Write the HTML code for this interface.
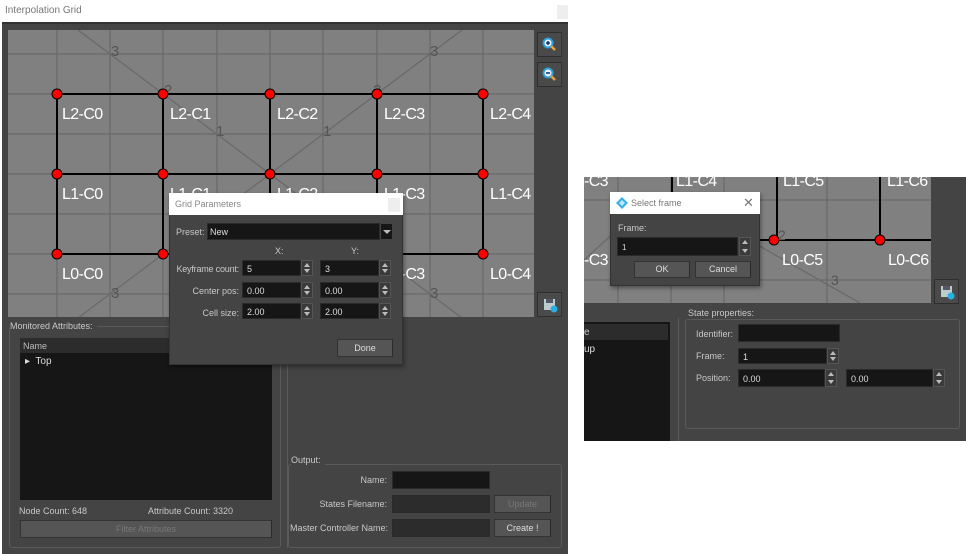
<!DOCTYPE html>
<html><head><meta charset="utf-8"><style>
*{box-sizing:border-box;margin:0;padding:0}
body{width:966px;height:554px;background:#fff;position:relative;overflow:hidden;font-family:"Liberation Sans",sans-serif;font-size:9px;color:#c8c8c8}
.a{position:absolute}
.f{position:absolute;background:#161616;border:1px solid #2a2a2a}
.sp{position:absolute;width:12px;background:#3a3a3a;border:1px solid #555}
.sp:before{content:"";position:absolute;left:2px;top:2px;border:3px solid transparent;border-bottom:4px solid #bbb;border-top:0}
.sp:after{content:"";position:absolute;left:2px;bottom:2px;border:3px solid transparent;border-top:4px solid #bbb;border-bottom:0}
.btn{position:absolute;background:#555;border:1px solid #333;border-right-color:#2a2a2a;color:#ddd;text-align:center;font-size:9px}
.grp{position:absolute;border:1px solid #5a5a5a;border-radius:3px}
.lbl{position:absolute;font-size:9px;color:#c8c8c8;white-space:nowrap}
.r{position:absolute;font-size:9px;color:#c8c8c8;white-space:nowrap;text-align:right}
.tb{position:absolute;background:#4a4a4a;border:1px solid #2e2e2e;border-right-color:#333;width:25px;height:25px}
</style></head><body>
<div class="a" style="left:5px;top:5px;font-size:10px;color:#777">Interpolation Grid</div>
<div class="a" style="left:557px;top:5px;width:11px;height:14px;background:#eee"></div>
<div class="a" style="left:2px;top:22px;width:566px;height:532px;background:#444;border-top:2px solid #333"></div>
<svg class="a" style="left:8px;top:30px" width="526" height="287" viewBox="8 30 526 287">
<rect x="8" y="30" width="526" height="287" fill="#808080"/>
<g stroke="#6a6a6a" stroke-width="1.3">
<line x1="57" y1="30" x2="57" y2="317"/><line x1="110" y1="30" x2="110" y2="317"/><line x1="163" y1="30" x2="163" y2="317"/><line x1="217" y1="30" x2="217" y2="317"/><line x1="270" y1="30" x2="270" y2="317"/><line x1="323" y1="30" x2="323" y2="317"/><line x1="377" y1="30" x2="377" y2="317"/><line x1="430" y1="30" x2="430" y2="317"/><line x1="483" y1="30" x2="483" y2="317"/>
<line x1="8" y1="54" x2="534" y2="54"/><line x1="8" y1="94" x2="534" y2="94"/><line x1="8" y1="134" x2="534" y2="134"/><line x1="8" y1="174" x2="534" y2="174"/><line x1="8" y1="214" x2="534" y2="214"/><line x1="8" y1="254" x2="534" y2="254"/><line x1="8" y1="294" x2="534" y2="294"/>
<line x1="78" y1="30" x2="462" y2="318"/><line x1="462" y1="30" x2="78" y2="318"/>
</g>
<g fill="#555" font-family="Liberation Sans" font-size="15"><text x="111" y="56">3</text><text x="430" y="56">3</text><text x="111" y="298">3</text><text x="430" y="298">3</text><text x="164" y="95">2</text><text x="373" y="95">2</text><text x="216" y="136">1</text><text x="323" y="136">1</text></g>
<g stroke="#000" stroke-width="2" fill="none"><rect x="57" y="94" width="426" height="160"/><line x1="57" y1="174" x2="483" y2="174"/><line x1="163" y1="94" x2="163" y2="254"/><line x1="270" y1="94" x2="270" y2="254"/><line x1="377" y1="94" x2="377" y2="254"/></g>
<g fill="#f00" stroke="#000" stroke-width="1">
<circle cx="57" cy="94" r="5"/><circle cx="163" cy="94" r="5"/><circle cx="270" cy="94" r="5"/><circle cx="377" cy="94" r="5"/><circle cx="483" cy="94" r="5"/>
<circle cx="57" cy="174" r="5"/><circle cx="163" cy="174" r="5"/><circle cx="270" cy="174" r="5"/><circle cx="377" cy="174" r="5"/><circle cx="483" cy="174" r="5"/>
<circle cx="57" cy="254" r="5"/><circle cx="163" cy="254" r="5"/><circle cx="270" cy="254" r="5"/><circle cx="377" cy="254" r="5"/><circle cx="483" cy="254" r="5"/></g>
<g fill="#fff" font-family="Liberation Sans" font-size="16" letter-spacing="-0.6">
<text x="62" y="119">L2-C0</text><text x="170" y="119">L2-C1</text><text x="277" y="119">L2-C2</text><text x="384" y="119">L2-C3</text><text x="490" y="119">L2-C4</text>
<text x="62" y="199">L1-C0</text><text x="170" y="199">L1-C1</text><text x="277" y="199">L1-C2</text><text x="384" y="199">L1-C3</text><text x="490" y="199">L1-C4</text>
<text x="62" y="279">L0-C0</text><text x="384" y="279">L0-C3</text><text x="490" y="279">L0-C4</text></g>
</svg>
<div class="tb" style="left:537px;top:32px"><svg width="23" height="23"><circle cx="10" cy="10" r="4.5" fill="#eef" stroke="#29a0d8" stroke-width="2"/><line x1="8" y1="10" x2="12" y2="10" stroke="#036" stroke-width="1.5"/><line x1="10" y1="8" x2="10" y2="12" stroke="#036" stroke-width="1.5"/><line x1="13" y1="13" x2="17" y2="17" stroke="#e8a040" stroke-width="2.5"/></svg></div>
<div class="tb" style="left:537px;top:62px"><svg width="23" height="23"><circle cx="10" cy="10" r="4.5" fill="#eef" stroke="#29a0d8" stroke-width="2"/><line x1="8" y1="10" x2="12" y2="10" stroke="#036" stroke-width="1.5"/><line x1="13" y1="13" x2="17" y2="17" stroke="#e8a040" stroke-width="2.5"/></svg></div>
<div class="tb" style="left:537px;top:292px"><svg width="23" height="23"><rect x="6" y="6" width="11" height="11" fill="#bcc"/><rect x="8" y="6" width="7" height="4" fill="#556"/><circle cx="16" cy="16" r="3.5" fill="#2ab0e0"/></svg></div>
<div class="grp" style="left:9px;top:326px;width:272px;height:222px"></div>
<div class="lbl" style="left:10px;top:321px;background:#444;padding-right:4px">Monitored Attributes:</div>
<div class="a" style="left:20px;top:338px;width:252px;height:162px;background:#161616"></div>
<div class="a" style="left:20px;top:338px;width:252px;height:15px;background:#2c2c2c;padding:3px 3px;color:#bbb">Name</div>
<div class="lbl" style="left:25px;top:356px;font-size:10px;color:#ddd">▸&nbsp; Top</div>
<div class="lbl" style="left:19px;top:506px">Node Count: 648</div>
<div class="lbl" style="left:148px;top:506px">Attribute Count: 3320</div>
<div class="btn" style="left:20px;top:520px;width:252px;height:18px;line-height:16px;color:#777">Filter Attributes</div>
<div class="a" style="left:287px;top:340px;width:1px;height:208px;background:#5a5a5a"></div>
<div class="grp" style="left:288px;top:464px;width:274px;height:84px"></div>
<div class="lbl" style="left:291px;top:455px;background:#444;padding-right:4px">Output:</div>
<div class="r" style="left:290px;width:97px;top:475px">Name:</div>
<div class="r" style="left:290px;width:97px;top:499px">States Filename:</div>
<div class="r" style="left:290px;width:97px;top:523px">Master Controller Name:</div>
<div class="f" style="left:392px;top:471px;width:98px;height:18px"></div>
<div class="f" style="left:392px;top:495px;width:98px;height:18px;background:#2c2c2c"></div>
<div class="f" style="left:392px;top:519px;width:98px;height:18px;background:#2c2c2c"></div>
<div class="btn" style="left:494px;top:495px;width:57px;height:18px;line-height:16px;color:#777">Update</div>
<div class="btn" style="left:494px;top:519px;width:57px;height:18px;line-height:16px">Create !</div>
<div class="a" style="left:169px;top:193px;width:234px;height:172px;background:#444;border:1px solid #333;box-shadow:1px 2px 4px rgba(0,0,0,.4)"></div>
<div class="a" style="left:169px;top:193px;width:234px;height:22px;background:#fff"></div>
<div class="lbl" style="left:175px;top:199px;color:#888">Grid Parameters</div>
<div class="a" style="left:388px;top:198px;width:12px;height:14px;background:#eee"></div>
<div class="lbl" style="left:176px;top:227px">Preset:</div>
<div class="f" style="left:207px;top:223px;width:173px;height:17px;padding:3px 2px;color:#ddd">New</div>
<div class="a" style="left:380px;top:223px;width:13px;height:17px;background:#161616;border:1px solid #444"><div style="margin:6px 2px;border:4px solid transparent;border-top:4px solid #bbb;border-bottom:0"></div></div>
<div class="lbl" style="left:275px;top:246px">X:</div><div class="lbl" style="left:351px;top:246px">Y:</div>
<div class="r" style="left:170px;width:69px;top:264px;letter-spacing:-0.2px">Keyframe count:</div>
<div class="r" style="left:170px;width:69px;top:286px">Center pos:</div>
<div class="r" style="left:170px;width:69px;top:308px">Cell size:</div>
<div class="f" style="left:242px;top:260px;width:59px;height:16px;padding:3px 4px;color:#ddd">5</div><div class="sp" style="left:301px;top:260px;height:16px"></div>
<div class="f" style="left:320px;top:260px;width:59px;height:16px;padding:3px 4px;color:#ddd">3</div><div class="sp" style="left:379px;top:260px;height:16px"></div>
<div class="f" style="left:242px;top:282px;width:59px;height:16px;padding:3px 4px;color:#ddd">0.00</div><div class="sp" style="left:301px;top:282px;height:16px"></div>
<div class="f" style="left:320px;top:282px;width:59px;height:16px;padding:3px 4px;color:#ddd">0.00</div><div class="sp" style="left:379px;top:282px;height:16px"></div>
<div class="f" style="left:242px;top:303px;width:59px;height:16px;padding:3px 4px;color:#ddd">2.00</div><div class="sp" style="left:301px;top:303px;height:16px"></div>
<div class="f" style="left:320px;top:303px;width:59px;height:16px;padding:3px 4px;color:#ddd">2.00</div><div class="sp" style="left:379px;top:303px;height:16px"></div>
<div class="btn" style="left:337px;top:339px;width:56px;height:18px;line-height:16px">Done</div>
<div class="a" style="left:584px;top:177px;width:382px;height:264px;background:#444"></div>
<svg class="a" style="left:584px;top:177px" width="347" height="126" viewBox="584 177 347 126">
<rect x="584" y="177" width="347" height="126" fill="#808080"/>
<g stroke="#6a6a6a" stroke-width="1.3"><line x1="618" y1="177" x2="618" y2="303"/><line x1="671" y1="177" x2="671" y2="303"/><line x1="724" y1="177" x2="724" y2="303"/><line x1="827" y1="177" x2="827" y2="303"/><line x1="584" y1="200" x2="931" y2="200"/><line x1="584" y1="280" x2="931" y2="280"/><line x1="740" y1="235" x2="860" y2="303"/><line x1="584" y1="260" x2="650" y2="200"/></g>
<g stroke="#000" stroke-width="2"><line x1="672" y1="177" x2="672" y2="192"/><line x1="777" y1="177" x2="777" y2="240"/><line x1="880" y1="177" x2="880" y2="240"/><line x1="760" y1="240" x2="931" y2="240"/></g>
<g fill="#f00" stroke="#000"><circle cx="774" cy="240" r="5"/><circle cx="880" cy="240" r="5"/></g>
<g fill="#fff" font-family="Liberation Sans" font-size="16" letter-spacing="-0.6"><text x="584" y="186">-C3</text><text x="676" y="186">L1-C4</text><text x="783" y="186">L1-C5</text><text x="887" y="186">L1-C6</text><text x="584" y="265">-C3</text><text x="782" y="265">L0-C5</text><text x="888" y="265">L0-C6</text></g>
<g fill="#555" font-family="Liberation Sans" font-size="14"><text x="778" y="240">2</text><text x="831" y="285">3</text></g>
</svg>
<div class="tb" style="left:934px;top:279px"><svg width="23" height="23"><rect x="6" y="6" width="11" height="11" fill="#bcc"/><rect x="8" y="6" width="7" height="4" fill="#556"/><circle cx="16" cy="16" r="3.5" fill="#2ab0e0"/></svg></div>
<div class="a" style="left:584px;top:322px;width:86px;height:119px;background:#161616"></div>
<div class="a" style="left:584px;top:324px;width:84px;height:16px;background:#2c2c2c;padding:3px 0;font-size:10px">e</div>
<div class="lbl" style="left:584px;top:344px;font-size:10px;color:#ddd">up</div>
<div class="a" style="left:678px;top:318px;width:1px;height:123px;background:#5a5a5a"></div>
<div class="grp" style="left:685px;top:319px;width:275px;height:110px"></div>
<div class="lbl" style="left:688px;top:308px;background:#444;padding-right:4px">State properties:</div>
<div class="lbl" style="left:696px;top:329px">Identifier:</div>
<div class="lbl" style="left:696px;top:351px">Frame:</div>
<div class="lbl" style="left:696px;top:373px">Position:</div>
<div class="f" style="left:738px;top:324px;width:102px;height:18px"></div>
<div class="f" style="left:738px;top:348px;width:89px;height:16px;padding:3px 4px;color:#ddd">1</div><div class="sp" style="left:827px;top:348px;height:16px"></div>
<div class="f" style="left:738px;top:369px;width:87px;height:18px;padding:4px 4px;color:#ddd">0.00</div><div class="sp" style="left:825px;top:369px;height:18px"></div>
<div class="f" style="left:846px;top:369px;width:87px;height:18px;padding:4px 4px;color:#ddd">0.00</div><div class="sp" style="left:933px;top:369px;height:18px"></div>
<div class="a" style="left:610px;top:192px;width:150px;height:94px;background:#444;border:1px solid #333;box-shadow:1px 2px 4px rgba(0,0,0,.4)"></div>
<div class="a" style="left:610px;top:192px;width:150px;height:22px;background:#fff"></div>
<svg class="a" style="left:615px;top:196px" width="14" height="14"><path d="M7 1 L13 7 L7 13 L1 7Z" fill="#3ab0e8"/><path d="M7 4 L10 7 L7 10 L4 7Z" fill="#bfe8ff"/></svg>
<div class="lbl" style="left:631px;top:198px;color:#777">Select frame</div>
<div class="lbl" style="left:743px;top:195px;font-size:13px;color:#777">✕</div>
<div class="lbl" style="left:618px;top:223px">Frame:</div>
<div class="f" style="left:617px;top:237px;width:121px;height:19px;padding:5px 4px;color:#ddd;font-size:8px">1</div><div class="sp" style="left:739px;top:237px;height:19px"></div>
<div class="btn" style="left:634px;top:261px;width:56px;height:17px;line-height:15px">OK</div>
<div class="btn" style="left:695px;top:261px;width:56px;height:17px;line-height:15px">Cancel</div>
</body></html>
